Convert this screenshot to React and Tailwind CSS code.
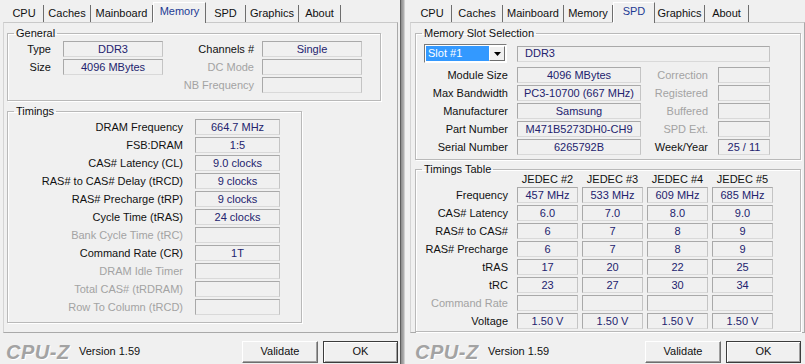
import React from "react";

const leftTabs = [
  { name: "CPU", w: "w-[39px]" },
  { name: "Caches", w: "w-[47px]" },
  { name: "Mainboard", w: "w-[62px]" },
  { name: "Memory", w: "w-[53px]" },
  { name: "SPD", w: "w-[40px]" },
  { name: "Graphics", w: "w-[53px]" },
  { name: "About", w: "w-[42px]" },
];

const rightTabs = [
  { name: "CPU", w: "w-[39px]" },
  { name: "Caches", w: "w-[51px]" },
  { name: "Mainboard", w: "w-[61px]" },
  { name: "Memory", w: "w-[49px]" },
  { name: "SPD", w: "w-[42px]" },
  { name: "Graphics", w: "w-[50px]" },
  { name: "About", w: "w-[44px]" },
];

const timings = [
  { label: "DRAM Frequency", value: "664.7 MHz" },
  { label: "FSB:DRAM", value: "1:5" },
  { label: "CAS# Latency (CL)", value: "9.0 clocks" },
  { label: "RAS# to CAS# Delay (tRCD)", value: "9 clocks" },
  { label: "RAS# Precharge (tRP)", value: "9 clocks" },
  { label: "Cycle Time (tRAS)", value: "24 clocks" },
  { label: "Bank Cycle Time (tRC)", value: "", off: true },
  { label: "Command Rate (CR)", value: "1T" },
  { label: "DRAM Idle Timer", value: "", off: true },
  { label: "Total CAS# (tRDRAM)", value: "", off: true },
  { label: "Row To Column (tRCD)", value: "", off: true },
];

const spdRows = [
  { label: "Module Size", value: "4096 MBytes", side: "Correction", sideValue: "", off: true },
  { label: "Max Bandwidth", value: "PC3-10700 (667 MHz)", side: "Registered", sideValue: "", off: true },
  { label: "Manufacturer", value: "Samsung", side: "Buffered", sideValue: "", off: true },
  { label: "Part Number", value: "M471B5273DH0-CH9", side: "SPD Ext.", sideValue: "", off: true },
  { label: "Serial Number", value: "6265792B", side: "Week/Year", sideValue: "25 / 11" },
];

const jedec = [
  { label: "Frequency", cells: ["457 MHz", "533 MHz", "609 MHz", "685 MHz"] },
  { label: "CAS# Latency", cells: ["6.0", "7.0", "8.0", "9.0"] },
  { label: "RAS# to CAS#", cells: ["6", "7", "8", "9"] },
  { label: "RAS# Precharge", cells: ["6", "7", "8", "9"] },
  { label: "tRAS", cells: ["17", "20", "22", "25"] },
  { label: "tRC", cells: ["23", "27", "30", "34"] },
  { label: "Command Rate", cells: ["", "", "", ""], off: true },
  { label: "Voltage", cells: ["1.50 V", "1.50 V", "1.50 V", "1.50 V"] },
];

function Tabs({ tabs, active, pad }) {
  return (
    <div className={`flex h-[22px] items-end ${pad}`}>
      {tabs.map((t) =>
        t.name === active ? (
          <div
            key={t.name}
            className={`${t.w} relative z-10 -mb-px flex h-[21px] items-center justify-center border-x border-t border-l-white border-t-white border-r-[#6e6e6e] bg-[#f0f0f0] pb-[3px] text-[#1d3b94]`}
          >
            {t.name}
          </div>
        ) : (
          <div
            key={t.name}
            className={`${t.w} flex h-[17px] items-center justify-center border-r border-r-[#6e6e6e] pb-[1px]`}
          >
            {t.name}
          </div>
        )
      )}
    </div>
  );
}

function Group({ title, className = "", children }) {
  return (
    <fieldset
      className={`border border-[#b9b9b9] shadow-[inset_1px_1px_0_#ffffff,1px_1px_0_#ffffff] ${className}`}
    >
      <legend className="ml-[6px] px-[2px] leading-[13px]">{title}</legend>
      {children}
    </fieldset>
  );
}

function Box({ w, children, left }) {
  return (
    <div
      className={`${w} flex h-[16px] shrink-0 items-center border border-[#a9a9a9] border-b-[#d9d9d9] border-r-[#c4c4c4] leading-none text-[#23236e] ${
        left ? "justify-start pl-[7px]" : "justify-center"
      }`}
    >
      {children}
    </div>
  );
}

function Footer({ pad, right }) {
  return (
    <div className={`flex h-[31px] items-center pt-[6px] ${pad}`}>
      <span className="w-[64px] text-[20px] font-bold italic leading-none tracking-[0.5px] text-[#a3a3a3] [text-shadow:1px_1px_0_#ffffff]">
        CPU-Z
      </span>
      <span className="ml-[9px]">Version 1.59</span>
      <div className={`ml-auto flex gap-[5px] ${right}`}>
        <button className="h-[22px] w-[76px] border border-t-white border-l-white border-r-[#6e6e6e] border-b-[#6e6e6e] bg-[#f0f0f0] shadow-[inset_-1px_-1px_0_#a0a0a0]">
          Validate
        </button>
        <button className="h-[22px] w-[75px] border border-[#3c3c3c] bg-[#f0f0f0] shadow-[inset_1px_1px_0_#ffffff,inset_-1px_-1px_0_#a0a0a0]">
          OK
        </button>
      </div>
    </div>
  );
}

function MemoryWindow() {
  return (
    <div className="flex h-[364px] w-[400px] shrink-0 flex-col">
      <Tabs tabs={leftTabs} active="Memory" pad="pl-[5px]" />
      <div className="ml-[3px] h-[311px] w-[395px] border border-[#a9a9a9] border-t-[#c9c9c9] border-l-[#d4d4d4]">
        <Group title="General" className="ml-[3px] mt-[4px] w-[374px] pb-[7px] pt-[1px]">
          <div className="flex flex-col gap-[2px]">
            <div className="flex items-center">
              <span className="w-[43px] text-right">Type</span>
              <span className="ml-[12px]">
                <Box w="w-[100px]">DDR3</Box>
              </span>
              <span className="w-[91px] text-right">Channels #</span>
              <span className="ml-[8px]">
                <Box w="w-[100px]">Single</Box>
              </span>
            </div>
            <div className="flex items-center">
              <span className="w-[43px] text-right">Size</span>
              <span className="ml-[12px]">
                <Box w="w-[100px]">4096 MBytes</Box>
              </span>
              <span className="w-[91px] text-right text-[#a3a3a3]">DC Mode</span>
              <span className="ml-[8px]">
                <Box w="w-[100px]" />
              </span>
            </div>
            <div className="flex items-center">
              <span className="w-[155px]" />
              <span className="w-[91px] text-right text-[#a3a3a3]">NB Frequency</span>
              <span className="ml-[8px]">
                <Box w="w-[100px]" />
              </span>
            </div>
          </div>
        </Group>
        <Group title="Timings" className="ml-[3px] mt-[4px] w-[295px] pb-[7px] pt-[1px]">
          <div className="flex flex-col gap-[2px]">
            {timings.map((t) => (
              <div key={t.label} className="flex items-center">
                <span className={`w-[175px] text-right ${t.off ? "text-[#a3a3a3]" : ""}`}>{t.label}</span>
                <span className="ml-[12px]">
                  <Box w="w-[85px]">{t.value}</Box>
                </span>
              </div>
            ))}
          </div>
        </Group>
      </div>
      <Footer pad="pl-[6px]" right="mr-[2px]" />
    </div>
  );
}

function SpdWindow() {
  return (
    <div className="flex h-[364px] w-[400px] shrink-0 flex-col">
      <Tabs tabs={rightTabs} active="SPD" pad="pl-[8px]" />
      <div className="ml-[5px] h-[311px] w-[395px] border border-[#a9a9a9] border-t-[#c9c9c9] border-l-[#d4d4d4]">
        <Group title="Memory Slot Selection" className="ml-[4px] mt-[4px] w-[386px] pb-[4px] pt-[4px]">
          <div className="flex h-[19px] items-center">
            <div className="ml-[8px] flex h-[19px] w-[83px] border border-[#7a7a7a] border-b-white border-r-white bg-white p-[1px]">
              <div className="flex flex-1 items-center bg-[#3399ff] pl-[2px] text-white">Slot #1</div>
              <div className="flex w-[16px] items-center justify-center border border-t-white border-l-white border-r-[#6e6e6e] border-b-[#6e6e6e] bg-[#f0f0f0]">
                <svg width="7" height="4" viewBox="0 0 7 4">
                  <path d="M0 0h7L3.5 4z" fill="#000000" />
                </svg>
              </div>
            </div>
            <span className="ml-[10px]">
              <Box w="w-[253px]" left>
                DDR3
              </Box>
            </span>
          </div>
          <div className="mt-[4px] flex flex-col gap-[2px]">
            {spdRows.map((r) => (
              <div key={r.label} className="flex items-center">
                <span className="w-[92px] text-right">{r.label}</span>
                <span className="ml-[9px]">
                  <Box w="w-[124px]">{r.value}</Box>
                </span>
                <span className={`w-[67px] text-right ${r.off ? "text-[#a3a3a3]" : ""}`}>{r.side}</span>
                <span className="ml-[10px]">
                  <Box w="w-[52px]">{r.sideValue}</Box>
                </span>
              </div>
            ))}
          </div>
        </Group>
        <Group title="Timings Table" className="ml-[4px] mt-[3px] w-[386px] pb-[2px]">
          <div className="-mt-[3px] flex h-[13px] items-center">
            <span className="w-[101px]" />
            <div className="flex gap-[4px]">
              {["JEDEC #2", "JEDEC #3", "JEDEC #4", "JEDEC #5"].map((h) => (
                <span key={h} className="w-[61px] text-center leading-none">
                  {h}
                </span>
              ))}
            </div>
          </div>
          <div className="mt-[1px] flex flex-col gap-[2px]">
            {jedec.map((r) => (
              <div key={r.label} className="flex items-center">
                <span className={`w-[92px] text-right ${r.off ? "text-[#a3a3a3]" : ""}`}>{r.label}</span>
                <div className="ml-[9px] flex gap-[4px]">
                  {r.cells.map((c, i) => (
                    <Box key={i} w="w-[61px]">
                      {c}
                    </Box>
                  ))}
                </div>
              </div>
            ))}
          </div>
        </Group>
      </div>
      <Footer pad="pl-[10px]" right="mr-[4px]" />
    </div>
  );
}

export default function App() {
  return (
    <div className="flex h-[364px] w-[805px] overflow-hidden bg-[#f0f0f0] font-['Liberation_Sans',Arial,sans-serif] text-[11px] leading-[13px] text-[#111111]">
      <MemoryWindow />
      <div className="h-full w-[5px] shrink-0 border-l border-l-[#5e5e5e] border-r border-r-[#cfcfcf] bg-[linear-gradient(to_right,#8a8a8a,#b4b4b4)]" />
      <SpdWindow />
    </div>
  );
}
